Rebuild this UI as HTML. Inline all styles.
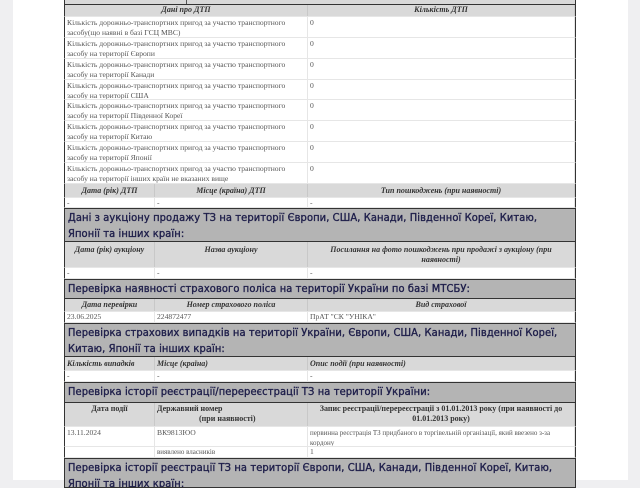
<!DOCTYPE html>
<html><head><meta charset="utf-8"><style>
body{margin:0;width:640px;height:480px;overflow:hidden;background:#efeff1;position:relative;font-family:"Liberation Serif",serif;}
.pg{position:absolute;left:13px;top:0;width:615px;height:480px;background:#fff;}
.r{position:absolute;left:64px;width:512px;box-sizing:border-box;border-left:1.5px solid #333;border-right:1.5px solid #333;border-bottom:1px solid #e6e6e6;}
.c{position:absolute;top:0;bottom:0;font-size:7.6px;line-height:10px;color:#555;padding:1px 2px;box-sizing:border-box;border-right:1px solid #e6e6e6;overflow:hidden;}
.h{background:#d9d9d9;}
.h .c{font-style:italic;font-weight:bold;color:#333;text-align:center;font-size:8px;border-right:1px solid #c8c8c8;}
.s{position:absolute;left:64px;width:512px;box-sizing:border-box;background:#b4b4b4;border:1.5px solid #333;font-family:"DejaVu Sans Condensed","DejaVu Sans",sans-serif;font-stretch:condensed;font-size:11px;line-height:16px;color:#1e1e4a;padding:1px 3px;letter-spacing:0.1px;-webkit-text-stroke:0.35px #1e1e4a;overflow:hidden;}
</style></head><body>
<div class="pg"></div>
<div class="r h" style="top:0;height:5px;border-bottom:1.5px solid #333"><div class="c" style="left:0;width:122px;border-right:1px solid #555"></div></div>
<div class="r h" style="top:5px;height:12px"><div class="c" style="left:0;width:243px;padding-top:0">Дані про ДТП</div><div class="c" style="left:243px;width:267px;padding-top:0">Кількість ДТП</div></div>

<div class="r" style="top:17px;height:21px"><div class="c" style="left:0;width:243px">Кількість дорожньо-транспортних пригод за участю транспортного засобу(що наявні в базі ГСЦ МВС)</div><div class="c" style="left:243px;width:267px">0</div></div>
<div class="r" style="top:38px;height:21px"><div class="c" style="left:0;width:243px">Кількість дорожньо-транспортних пригод за участю транспортного засобу на території Європи</div><div class="c" style="left:243px;width:267px">0</div></div>
<div class="r" style="top:59px;height:21px"><div class="c" style="left:0;width:243px">Кількість дорожньо-транспортних пригод за участю транспортного засобу на території Канади</div><div class="c" style="left:243px;width:267px">0</div></div>
<div class="r" style="top:80px;height:20px"><div class="c" style="left:0;width:243px">Кількість дорожньо-транспортних пригод за участю транспортного засобу на території США</div><div class="c" style="left:243px;width:267px">0</div></div>
<div class="r" style="top:100px;height:21px"><div class="c" style="left:0;width:243px">Кількість дорожньо-транспортних пригод за участю транспортного засобу на території Південної Кореї</div><div class="c" style="left:243px;width:267px">0</div></div>
<div class="r" style="top:121px;height:21px"><div class="c" style="left:0;width:243px">Кількість дорожньо-транспортних пригод за участю транспортного засобу на території Китаю</div><div class="c" style="left:243px;width:267px">0</div></div>
<div class="r" style="top:142px;height:21px"><div class="c" style="left:0;width:243px">Кількість дорожньо-транспортних пригод за участю транспортного засобу на території Японії</div><div class="c" style="left:243px;width:267px">0</div></div>
<div class="r" style="top:163px;height:21px"><div class="c" style="left:0;width:243px">Кількість дорожньо-транспортних пригод за участю транспортного засобу на території інших країн не вказаних вище</div><div class="c" style="left:243px;width:267px">0</div></div>

<div class="r h" style="top:184px;height:14px"><div class="c" style="left:0;width:90px;padding-top:2px">Дата (рік) ДТП</div><div class="c" style="left:90px;width:153px;padding-top:2px">Місце (країна) ДТП</div><div class="c" style="left:243px;width:267px;padding-top:2px">Тип пошкоджень (при наявності)</div></div>
<div class="r" style="top:198px;height:10px"><div class="c" style="left:0;width:90px;padding-top:0">-</div><div class="c" style="left:90px;width:153px;padding-top:0">-</div><div class="c" style="left:243px;width:267px;padding-top:0">-</div></div>

<div class="s" style="top:208px;height:34px">Дані з аукціону продажу ТЗ на території Європи, США, Канади, Південної Кореї, Китаю,<br>Японії та інших країн:</div>
<div class="r h" style="top:242px;height:26px"><div class="c" style="left:0;width:90px;padding-top:3px">Дата (рік) аукціону</div><div class="c" style="left:90px;width:153px;padding-top:3px">Назва аукціону</div><div class="c" style="left:243px;width:267px;padding-top:3px">Посилання на фото пошкоджень при продажі з аукціону (при наявності)</div></div>
<div class="r" style="top:268px;height:11px"><div class="c" style="left:0;width:90px;padding-top:0">-</div><div class="c" style="left:90px;width:153px;padding-top:0">-</div><div class="c" style="left:243px;width:267px;padding-top:0">-</div></div>

<div class="s" style="top:279px;height:20px">Перевірка наявності страхового поліса на території України по базі МТСБУ:</div>
<div class="r h" style="top:299px;height:13px"><div class="c" style="left:0;width:90px;padding-top:1px">Дата перевірки</div><div class="c" style="left:90px;width:153px;padding-top:1px">Номер страхового поліса</div><div class="c" style="left:243px;width:267px;padding-top:1px">Вид страхової</div></div>
<div class="r" style="top:312px;height:11px"><div class="c" style="left:0;width:90px;padding-top:0">23.06.2025</div><div class="c" style="left:90px;width:153px;padding-top:0">224872477</div><div class="c" style="left:243px;width:267px;padding-top:0">ПрАТ "СК "УНІКА"</div></div>

<div class="s" style="top:323px;height:34px">Перевірка страхових випадків на території України, Європи, США, Канади, Південної Кореї,<br>Китаю, Японії та інших країн:</div>
<div class="r h" style="top:357px;height:14px"><div class="c" style="left:0;width:90px;padding-top:2px;text-align:left">Кількість випадків</div><div class="c" style="left:90px;width:153px;padding-top:2px;text-align:left">Місце (країна)</div><div class="c" style="left:243px;width:267px;padding-top:2px;text-align:left">Опис події (при наявності)</div></div>
<div class="r" style="top:371px;height:11px"><div class="c" style="left:0;width:90px;padding-top:0">-</div><div class="c" style="left:90px;width:153px;padding-top:0">-</div><div class="c" style="left:243px;width:267px;padding-top:0">-</div></div>

<div class="s" style="top:382px;height:21px">Перевірка історії реєстрації/перереєстрації ТЗ на території України:</div>
<div class="r h" style="top:403px;height:24px"><div class="c" style="left:0;width:90px;padding-top:1px;font-style:normal">Дата події</div><div class="c" style="left:90px;width:153px;padding-top:1px;font-style:normal;text-align:left">Державний номер<br><span style="padding-left:42px">(при наявності)</span></div><div class="c" style="left:243px;width:267px;padding-top:1px;font-style:normal">Запис реєстрації/перереєстрації з 01.01.2013 року (при наявності до 01.01.2013 року)</div></div>
<div class="r" style="top:427px;height:20px"><div class="c" style="left:0;width:90px">13.11.2024</div><div class="c" style="left:90px;width:153px">ВК9813ЮО</div><div class="c" style="left:243px;width:267px;font-size:7px">первинна реєстрація ТЗ придбаного в торгівельній організації, який ввезено з-за кордону</div></div>
<div class="r" style="top:447px;height:11px"><div class="c" style="left:0;width:90px;padding-top:0"></div><div class="c" style="left:90px;width:153px;padding-top:0;font-size:7px">виявлено власників</div><div class="c" style="left:243px;width:267px;padding-top:0">1</div></div>

<div class="s" style="top:458px;height:30px">Перевірка історії реєстрації ТЗ на території Європи, США, Канади, Південної Кореї, Китаю,<br>Японії та інших країн:</div>
</body></html>
